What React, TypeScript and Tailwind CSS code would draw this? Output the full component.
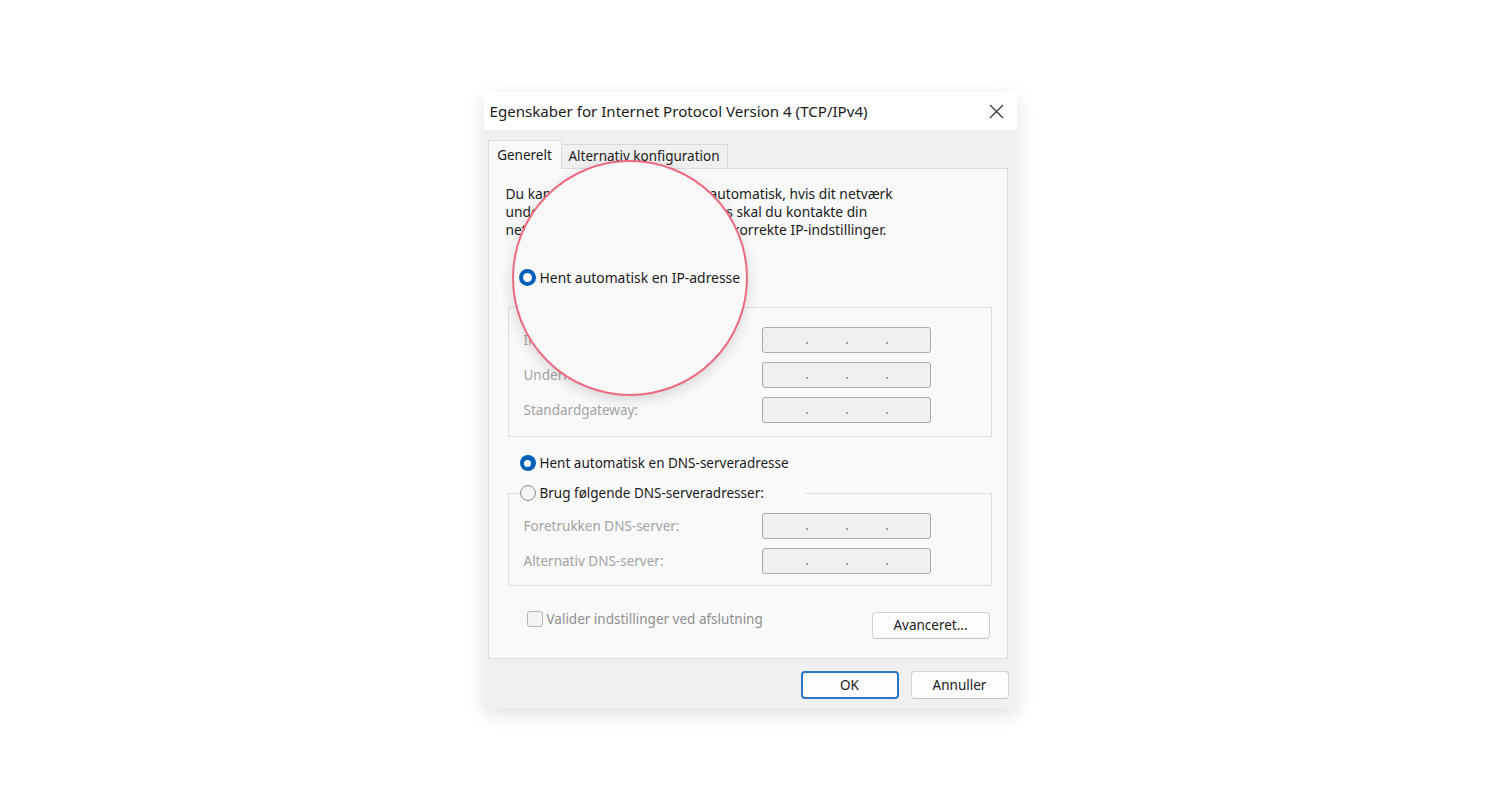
import React from "react";

function Radio({ checked }: { checked: boolean }) {
  return checked ? (
    <span className="w-4 h-4 rounded-full bg-[#005fb8] flex items-center justify-center shrink-0">
      <span className="w-[7px] h-[7px] rounded-full bg-white" />
    </span>
  ) : (
    <span className="w-4 h-4 rounded-full border border-[#8a8a8a] bg-[#f6f6f6] shrink-0" />
  );
}

function IpInput() {
  return (
    <div className="w-[169px] h-[26px] rounded-[3px] border border-[#a9a9a9] bg-[#f0f0f0] flex items-center pl-[43px] gap-[38px]">
      <span className="w-[2px] h-[2px] mt-[5px] rounded-full bg-[#8a8a8a]" />
      <span className="w-[2px] h-[2px] mt-[5px] rounded-full bg-[#8a8a8a]" />
      <span className="w-[2px] h-[2px] mt-[5px] rounded-full bg-[#8a8a8a]" />
    </div>
  );
}

function FieldRow({ label, first }: { label: string; first?: boolean }) {
  return (
    <div className={`flex items-center h-[26px] ${first ? "" : "mt-[9px]"}`}>
      <span className="w-[238px] text-[13.5px] text-[#a3a3a3]">{label}</span>
      <IpInput />
    </div>
  );
}

export default function App() {
  return (
    <div className="w-[1500px] h-[800px] bg-white flex items-center justify-center font-['Noto_Sans',sans-serif] text-[#1b1b1b]">
      <div className="relative w-[533px] h-[616px] bg-[#f0f0f0] shadow-[0_6px_18px_rgba(0,0,0,0.12)] flex flex-col">
        {/* Title bar */}
        <div className="h-[38px] bg-white flex items-center justify-between pl-[6px] pr-[13px] shrink-0">
          <span className="text-[15.1px] text-[#1b1b1b]">Egenskaber for Internet Protocol Version 4 (TCP/IPv4)</span>
          <svg width="15" height="15" viewBox="0 0 15 15" className="text-[#333]">
            <path d="M1 1L14 14M14 1L1 14" stroke="currentColor" strokeWidth="1.2" fill="none" />
          </svg>
        </div>

        {/* Tabs */}
        <div className="mt-[10px] ml-[4px] flex items-end h-[28px] shrink-0">
          <div className="relative z-10 h-[29px] -mb-px w-[74px] bg-[#f9f9f9] border border-b-0 border-[#d9d9d9] flex items-center justify-center text-[13.5px]">
            Generelt
          </div>
          <div className="h-[24px] w-[166px] bg-[#f0f0f0] border border-b-0 border-l-0 border-[#d9d9d9] flex items-center justify-center text-[13.5px]">
            Alternativ konfiguration
          </div>
        </div>

        {/* Panel */}
        <div className="ml-[4px] w-[520px] h-[491px] bg-[#f9f9f9] border border-[#dcdcdc] shrink-0 flex flex-col">
          <p className="mt-[16px] ml-[17px] text-[13.8px] leading-[18px] text-[#1b1b1b] whitespace-nowrap">
            Du kan få IP-indstillinger tildelt automatisk, hvis dit netværk
            <br />
            understøtter denne funktion. Ellers skal du kontakte din
            <br />
            netværksadministrator for at få de korrekte IP-indstillinger.
          </p>

          {/* covered by the magnifier, which shows this option */}
          <div aria-hidden className="invisible mt-[28px] ml-[31px] h-[18px] flex items-center gap-[4px] text-[13.5px]">
            <Radio checked />
            <span>Hent automatisk en IP-adresse</span>
          </div>

          <fieldset className="mt-[13px] ml-[19px] mr-[15px] border border-[#dedede] pl-[15px] pr-0 pb-[13px]">
            <legend className="-ml-[4px] pr-[40px]">
              <span className="h-[18px] flex items-center gap-[4px] text-[13.5px]">
                <Radio checked={false} />
                <span>Brug følgende IP-adresse:</span>
              </span>
            </legend>
            <div className="pt-[11px]">
              <FieldRow label="IP-adresse:" first />
              <FieldRow label="Undernetmaske:" />
              <FieldRow label="Standardgateway:" />
            </div>
          </fieldset>

          <div className="mt-[17px] ml-[31px] h-[18px] flex items-center gap-[4px] text-[13.5px]">
            <Radio checked />
            <span>Hent automatisk en DNS-serveradresse</span>
          </div>

          <fieldset className="mt-[12px] ml-[19px] mr-[15px] border border-[#dedede] pl-[15px] pr-0 pb-[11px]">
            <legend className="-ml-[4px] pr-[41px]">
              <span className="h-[18px] flex items-center gap-[4px] text-[13.5px]">
                <Radio checked={false} />
                <span>Brug følgende DNS-serveradresser:</span>
              </span>
            </legend>
            <div className="pt-[11px]">
              <FieldRow label="Foretrukken DNS-server:" first />
              <FieldRow label="Alternativ DNS-server:" />
            </div>
          </fieldset>

          <div className="mt-[24px] ml-[38px] mr-[17px] flex items-start justify-between">
            <div className="h-[18px] flex items-center gap-[4px]">
              <span className="w-4 h-4 rounded-[3px] border border-[#b4b4b4] bg-[#f4f4f4]" />
              <span className="text-[13.5px] text-[#8f8f8f]">Valider indstillinger ved afslutning</span>
            </div>
            <button className="mt-[2px] w-[118px] h-[27px] rounded-[4px] border border-[#d3d3d3] border-b-[#c4c4c4] bg-[#fdfdfd] text-[13.5px] text-[#1b1b1b]">
              Avanceret...
            </button>
          </div>
        </div>

        {/* Footer */}
        <div className="mt-[12px] mr-[8px] flex justify-end gap-[12px]">
          <button className="w-[98px] h-[28px] rounded-[4px] border-2 border-[#2a76c6] bg-[#fdfdfd] text-[13.5px] text-[#1b1b1b]">
            OK
          </button>
          <button className="w-[98px] h-[28px] rounded-[4px] border border-[#d3d3d3] border-b-[#c4c4c4] bg-[#fdfdfd] text-[13.5px] text-[#1b1b1b]">
            Annuller
          </button>
        </div>

        {/* Magnifier */}
        <div className="absolute left-[28px] top-[68px] w-[236px] h-[236px] rounded-full border-2 border-[#ec6b80] bg-[#f8f8f8] shadow-[0_4px_14px_rgba(0,0,0,0.14)] flex items-center pl-[5px] z-20">
          <div className="flex items-center gap-[4px] text-[13.9px] text-[#1b1b1b] whitespace-nowrap">
            <span className="w-[17px] h-[17px] rounded-full border-[4px] border-[#005fb8] bg-white shrink-0" />
            <span>Hent automatisk en IP-adresse</span>
          </div>
        </div>
      </div>
    </div>
  );
}
